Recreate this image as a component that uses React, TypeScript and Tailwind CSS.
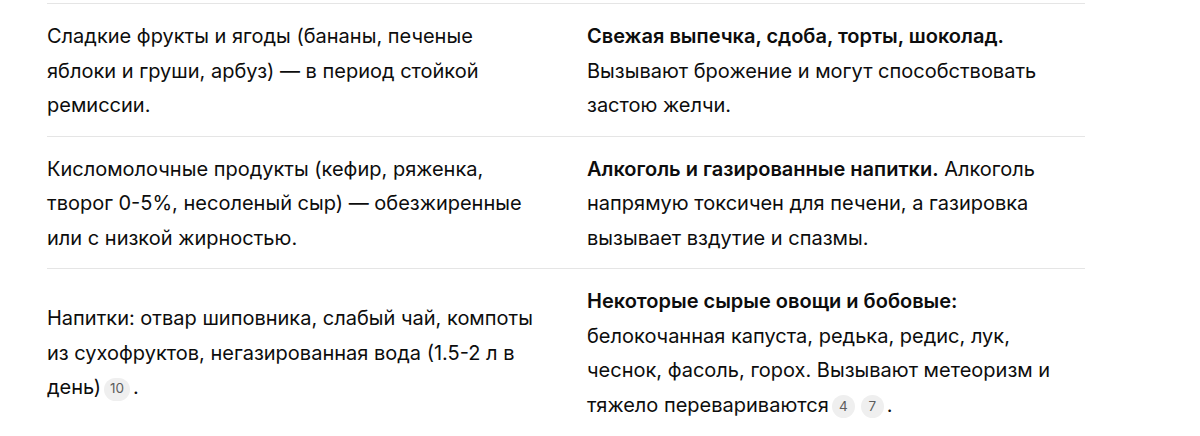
import { Fragment } from "react";

const rows = [
  {
    left: ["Сладкие фрукты и ягоды (бананы, печеные", "яблоки и груши, арбуз) — в период стойкой", "ремиссии."],
    bold: "Свежая выпечка, сдоба, торты, шоколад.",
    right: ["Вызывают брожение и могут способствовать", "застою желчи."],
    inline: false,
  },
  {
    left: ["Кисломолочные продукты (кефир, ряженка,", "творог 0-5%, несоленый сыр) — обезжиренные", "или с низкой жирностью."],
    bold: "Алкоголь и газированные напитки.",
    right: [" Алкоголь", "напрямую токсичен для печени, а газировка", "вызывает вздутие и спазмы."],
    inline: true,
  },
];

function Lines({ items }: { items: string[] }) {
  return (
    <>
      {items.map((t, i) => (
        <Fragment key={i}>
          {i > 0 && <br />}
          {t}
        </Fragment>
      ))}
    </>
  );
}

function Cite({ n }: { n: string }) {
  return (
    <span className="mx-[3px] inline-flex h-[23px] min-w-[23px] items-center justify-center rounded-full bg-[#efefef] px-[6px] align-[1px] text-[13.5px] leading-none tracking-normal text-[#5d5d5d]">
      {n}
    </span>
  );
}

export default function App() {
  return (
    <div className="h-[436px] w-[1200px] overflow-hidden bg-white pt-[3px] font-['Inter',sans-serif] text-[20px] leading-[34.5px] text-[#0d0d0d]">
      <table className="ml-[47px] w-[1038px] table-fixed border-collapse">
        <tbody>
          {rows.map((r, i) => (
            <tr key={i} className="border-t border-[#e5e5e5]">
              <td className="w-[540px] pt-[15px] pb-[13px] pr-[20px] align-middle whitespace-nowrap">
                <Lines items={r.left} />
              </td>
              <td className="pt-[15px] pb-[13px] align-middle whitespace-nowrap">
                <strong className="font-semibold">{r.bold}</strong>
                {!r.inline && <br />}
                <Lines items={r.right} />
              </td>
            </tr>
          ))}
          <tr className="border-t border-[#e5e5e5]">
            <td className="w-[540px] pt-[15px] pb-[13px] pr-[20px] align-middle whitespace-nowrap">
              Напитки: отвар шиповника, слабый чай, компоты
              <br />
              из сухофруктов, негазированная вода (1.5-2 л в
              <br />
              день)
              <Cite n="10" />.
            </td>
            <td className="pt-[15px] pb-[13px] align-middle whitespace-nowrap">
              <strong className="font-semibold">Некоторые сырые овощи и бобовые:</strong>
              <br />
              белокочанная капуста, редька, редис, лук,
              <br />
              чеснок, фасоль, горох. Вызывают метеоризм и
              <br />
              тяжело перевариваются
              <Cite n="4" />
              <Cite n="7" />.
            </td>
          </tr>
        </tbody>
      </table>
    </div>
  );
}
